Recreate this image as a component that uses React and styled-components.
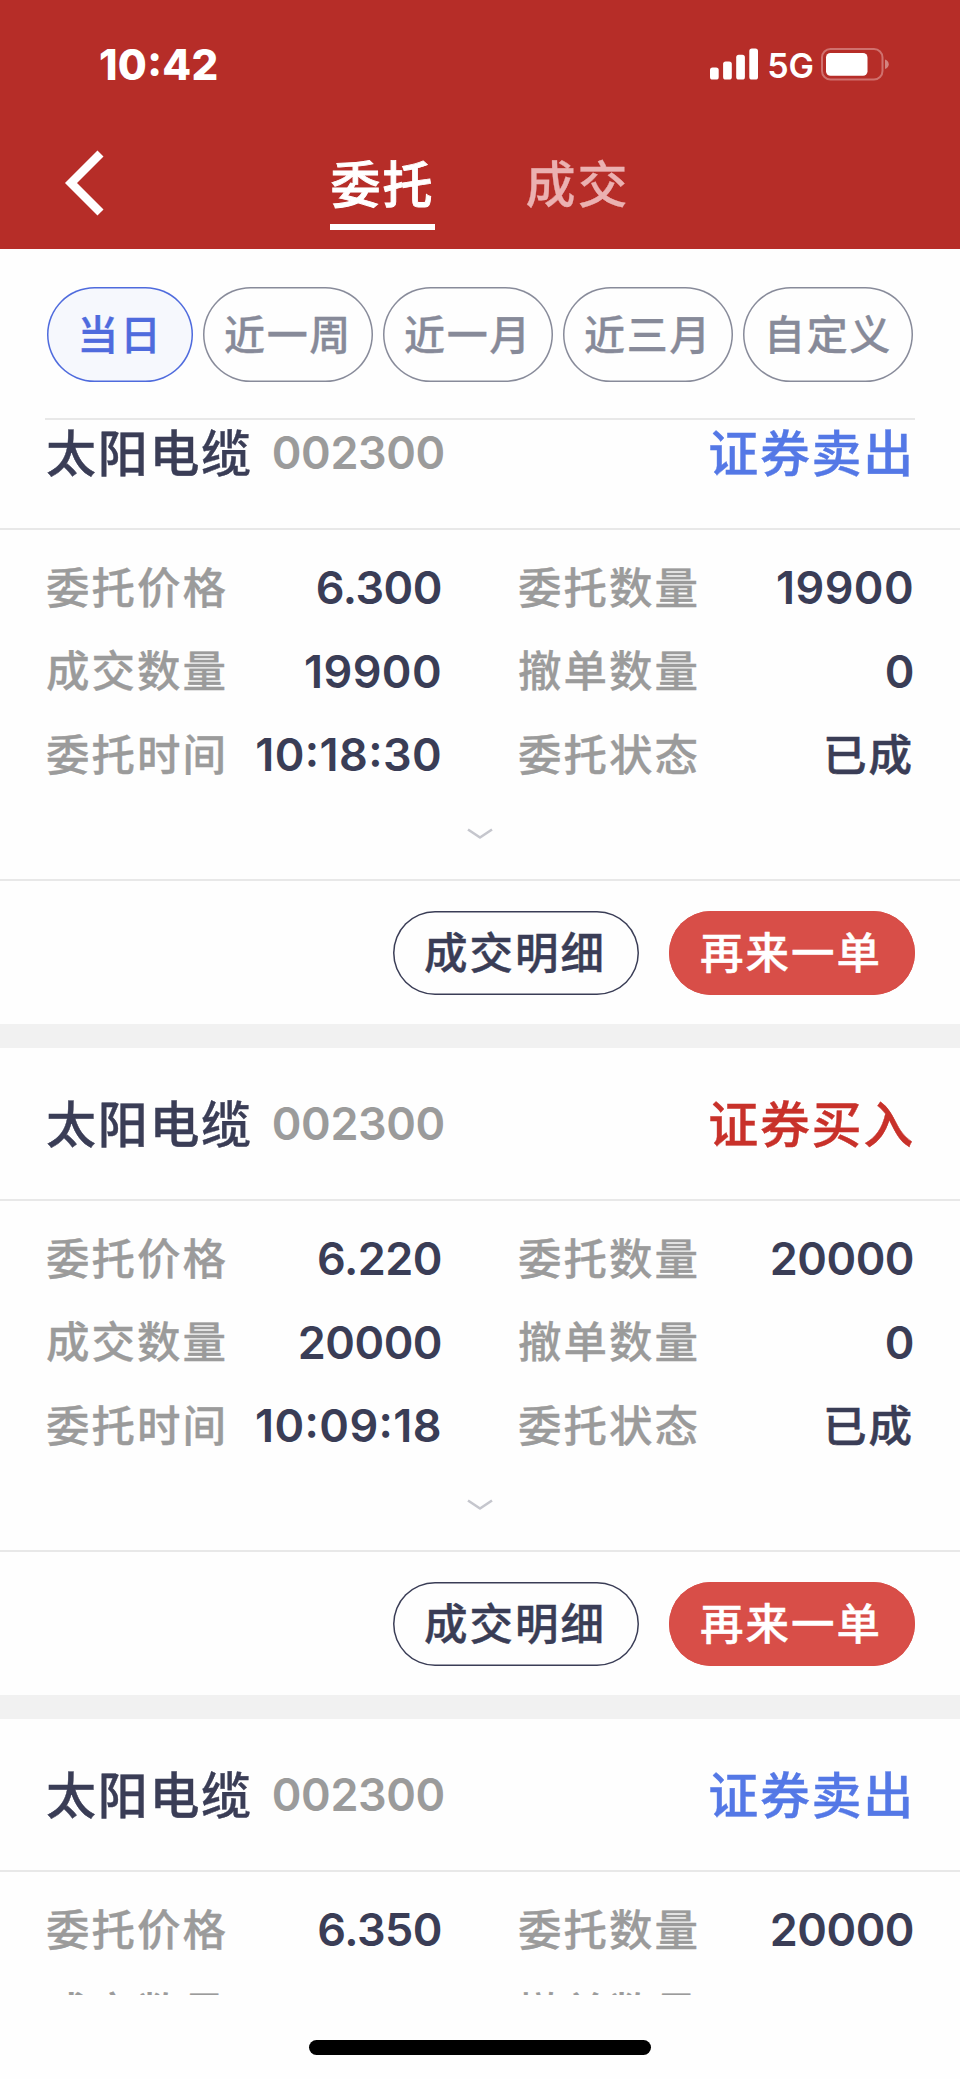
import React from 'react';
import styled, { createGlobalStyle } from 'styled-components';

const GlobalStyle = createGlobalStyle`
  * {
    box-sizing: border-box;
  }
  body {
    margin: 0;
    background: #fff;
    font-family: Inter, "Noto Sans CJK SC", sans-serif;
  }
  button {
    margin: 0;
    padding: 0;
    border: 0;
    background: none;
    font-family: inherit;
    white-space: nowrap;
  }
`;

const Page = styled.div`
  width: 960px;
  height: 2079px;
  display: flex;
  flex-direction: column;
  overflow: hidden;
  background: #fefefe;
`;

const Header = styled.header`
  height: 249px;
  flex: none;
  background: #b62d28;
  color: #fff;
`;

const StatusBar = styled.div`
  height: 128px;
  padding: 0 71px 0 99px;
  display: flex;
  align-items: center;
  justify-content: space-between;
`;

const Clock = styled.span`
  font-size: 42px;
  font-weight: 800;
  font-feature-settings: "case";
  letter-spacing: 0.3px;
`;

const StatusIcons = styled.div`
  display: flex;
  align-items: center;
`;

const Network = styled.span`
  margin: 2px 7px 0 9px;
  font-size: 34px;
  font-weight: 600;
`;

const NavBar = styled.nav`
  height: 121px;
  padding-left: 60px;
  display: flex;
`;

const BackButton = styled.button`
  width: 50px;
  height: 109px;
  margin-right: 220px;
  display: flex;
  align-items: center;
`;

const Tab = styled.button`
  width: 105px;
  height: 102px;
  margin-right: 90px;
  padding-top: 15px;
  border-bottom: 6px solid ${({ $active }) => ($active ? '#fff' : 'transparent')};
  color: ${({ $active }) => ($active ? '#fff' : '#ebb1b1')};
  font-size: 50px;
  font-weight: 500;
  letter-spacing: 2px;
  line-height: 84px;
  -webkit-text-stroke: ${({ $active }) => ($active ? 0.9 : 0.3)}px;
`;

const Filters = styled.div`
  height: 171px;
  flex: none;
  margin: 0 45px;
  padding: 38px 2px 0;
  display: flex;
  gap: 10px;
  border-bottom: 2px solid #e8e8e8;
`;

const Filter = styled.button`
  width: ${({ $active }) => ($active ? 146 : 170)}px;
  height: 95px;
  padding-bottom: 5px;
  border-radius: 48px;
  box-shadow: inset 0 0 0 1.5px ${({ $active }) => ($active ? '#4f6bdd' : '#888b9a')};
  background: ${({ $active }) => ($active ? '#f6f8fd' : 'transparent')};
  color: ${({ $active }) => ($active ? '#4f6bdd' : '#878a99')};
  font-size: 41px;
  font-weight: 500;
  letter-spacing: 1.7px;
  -webkit-text-stroke: 0.3px;
`;

const Viewport = styled.main`
  height: 1575px;
  flex: none;
  overflow: hidden;
`;

/* list is scrolled a little past the top of the first card */
const List = styled.div`
  margin-top: -43px;
`;

const Card = styled.section`
  border-bottom: 24px solid #f1f1f1;
`;

const CardHeader = styled.div`
  height: 153px;
  padding: 0 45px 0 46px;
  display: flex;
  align-items: center;
  border-bottom: 2px solid #e8e8e8;
`;

const StockName = styled.span`
  margin-top: -6px;
  color: #3a3d56;
  font-size: 50px;
  font-weight: 500;
  letter-spacing: 1.7px;
  -webkit-text-stroke: 0.4px;
`;

const StockCode = styled.span`
  flex: 1;
  margin-left: 19px;
  color: #9b9b9b;
  font-size: 45px;
  font-weight: 600;
  letter-spacing: -0.4px;
`;

const Side = styled.span`
  margin-top: -6px;
  color: ${({ $side }) => ($side === 'sell' ? '#5478e6' : '#c8312a')};
  font-size: 50px;
  font-weight: 500;
  letter-spacing: 1.7px;
  -webkit-text-stroke: 0.4px;
`;

const CardBody = styled.div`
  height: 349px;
  padding: 16px 46px 0;
`;

const Fields = styled.div`
  display: grid;
  grid-template-columns: 396px 396px;
  grid-auto-rows: 83.6px;
  column-gap: 76px;
`;

const Field = styled.div`
  display: flex;
  align-items: center;
  justify-content: space-between;
  white-space: nowrap;
`;

const Label = styled.span`
  margin-top: -5px;
  color: #9b9b9b;
  font-size: 43.5px;
  font-weight: 500;
  letter-spacing: 2px;
  -webkit-text-stroke: 0.3px;
`;

const Value = styled.span`
  color: #3a3d56;
  font-size: 45px;
  font-weight: 600;
  font-feature-settings: "case";
  letter-spacing: ${({ $loose }) => ($loose ? 0.4 : -0.5)}px;
`;

const StatusValue = styled(Label)`
  color: #3a3d56;
  -webkit-text-stroke: 0.6px;
`;

const Expand = styled.div`
  height: 74px;
  display: flex;
  align-items: center;
  justify-content: center;
`;

const CardFooter = styled.div`
  height: 145px;
  padding-right: 45px;
  display: flex;
  align-items: center;
  justify-content: flex-end;
  gap: 30px;
  border-top: 2px solid #e8e8e8;
`;

const ActionButton = styled.button`
  width: 246px;
  height: 84px;
  padding: 0 2px 4px 0;
  border-radius: 42px;
  box-shadow: inset 0 0 0 1.5px ${({ $primary }) => ($primary ? '#d84e48' : '#3a3d56')};
  background: ${({ $primary }) => ($primary ? '#d84e48' : 'transparent')};
  color: ${({ $primary }) => ($primary ? '#fff' : '#3a3d56')};
  font-size: 43.5px;
  font-weight: 500;
  letter-spacing: 2px;
  -webkit-text-stroke: 0.4px;
`;

const HomeBar = styled.footer`
  flex: 1;
  padding-top: 45px;
  display: flex;
  justify-content: center;
`;

const HomeIndicator = styled.div`
  width: 342px;
  height: 15px;
  border-radius: 8px;
  background: #000;
`;

const filters = ['当日', '近一周', '近一月', '近三月', '自定义'];

const orders = [
  { side: 'sell', price: '6.300', amount: '19900', filled: '19900', cancelled: '0', time: '10:18:30', status: '已成' },
  { side: 'buy', price: '6.220', amount: '20000', filled: '20000', cancelled: '0', time: '10:09:18', status: '已成' },
  { side: 'sell', price: '6.350', amount: '20000' },
];

function SignalIcon() {
  return (
    <svg width="48" height="32" viewBox="0 0 48 32" fill="#fff">
      <rect x="0" y="19.5" width="8.7" height="12" rx="2.6" />
      <rect x="13.1" y="13.5" width="8.7" height="18" rx="2.6" />
      <rect x="26.2" y="6.8" width="8.7" height="24.7" rx="2.6" />
      <rect x="39.3" y="0.5" width="8.7" height="31" rx="2.6" />
    </svg>
  );
}

function BatteryIcon() {
  return (
    <svg width="68" height="33" viewBox="0 0 68 33">
      <rect x="1" y="1" width="60.5" height="30.5" rx="8.5" fill="none" stroke="#d0716e" strokeWidth="2" />
      <rect x="5" y="5" width="41.5" height="22.7" rx="4.5" fill="#fff" />
      <path d="M64 11.5c5 1.8 5 7.7 0 9.5z" fill="#d38380" />
    </svg>
  );
}

function OrderCard({ order }) {
  const fields = [
    ['委托价格', order.price],
    ['委托数量', order.amount],
    ['成交数量', order.filled],
    ['撤单数量', order.cancelled],
    ['委托时间', order.time],
  ];
  const shown = order.time ? fields : fields.slice(0, 4);

  return (
    <Card>
      <CardHeader>
        <StockName>太阳电缆</StockName>
        <StockCode>002300</StockCode>
        <Side $side={order.side}>{order.side === 'sell' ? '证券卖出' : '证券买入'}</Side>
      </CardHeader>
      <CardBody>
        <Fields>
          {shown.map(([label, value]) => (
            <Field key={label}>
              <Label>{label}</Label>
              <Value $loose={value?.includes('1')}>{value}</Value>
            </Field>
          ))}
          {order.status && (
            <Field>
              <Label>委托状态</Label>
              <StatusValue>{order.status}</StatusValue>
            </Field>
          )}
        </Fields>
        {order.time && (
          <Expand>
            <svg width="26" height="12" viewBox="0 0 26 12" fill="none" stroke="#c5c6cd" strokeWidth="2.6">
              <path d="M1 1.5L13 9.5L25 1.5" strokeLinejoin="round" />
            </svg>
          </Expand>
        )}
      </CardBody>
      {order.time && (
        <CardFooter>
          <ActionButton>成交明细</ActionButton>
          <ActionButton $primary>再来一单</ActionButton>
        </CardFooter>
      )}
    </Card>
  );
}

function App() {
  return (
    <Page>
      <GlobalStyle />
      <Header>
        <StatusBar>
          <Clock>10:42</Clock>
          <StatusIcons>
            <SignalIcon />
            <Network>5G</Network>
            <BatteryIcon />
          </StatusIcons>
        </StatusBar>
        <NavBar>
          <BackButton aria-label="返回">
            <svg width="50" height="70" viewBox="0 0 50 70" fill="none" stroke="#fff" strokeWidth="8.5">
              <path d="M40.5 5.5L11 35L40.5 64.5" />
            </svg>
          </BackButton>
          <Tab $active>委托</Tab>
          <Tab>成交</Tab>
        </NavBar>
      </Header>
      <Filters>
        {filters.map((name, index) => (
          <Filter key={name} $active={index === 0}>{name}</Filter>
        ))}
      </Filters>
      <Viewport>
        <List>
          {orders.map((order, index) => (
            <OrderCard key={index} order={order} />
          ))}
        </List>
      </Viewport>
      <HomeBar>
        <HomeIndicator />
      </HomeBar>
    </Page>
  );
}

export default App;
